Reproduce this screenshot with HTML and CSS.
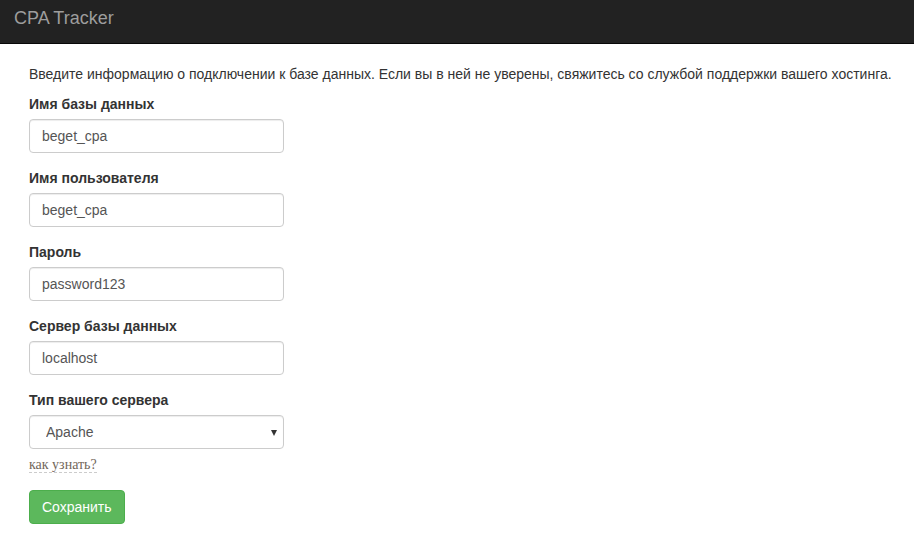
FILE: index.html
```html
<!DOCTYPE html>
<html lang="ru">
<head>
<meta charset="utf-8">
<title>CPA Tracker</title>
<link rel="stylesheet" href="styles.css">
</head>
<body>
<nav class="navbar">
  <a class="brand" href="#">CPA Tracker</a>
</nav>
<main class="content">
  <p class="intro">Введите информацию о подключении к базе данных. Если вы в ней не уверены, свяжитесь со службой поддержки вашего хостинга.</p>
  <form class="form">
    <div class="form-group">
      <label class="label">Имя базы данных</label>
      <input class="control" type="text" value="beget_cpa">
    </div>
    <div class="form-group">
      <label class="label">Имя пользователя</label>
      <input class="control" type="text" value="beget_cpa">
    </div>
    <div class="form-group">
      <label class="label">Пароль</label>
      <input class="control" type="text" value="password123">
    </div>
    <div class="form-group">
      <label class="label">Сервер базы данных</label>
      <input class="control" type="text" value="localhost">
    </div>
    <div class="form-group">
      <label class="label">Тип вашего сервера</label>
      <div class="select-wrap">
        <select class="control select">
          <option>Apache</option>
          <option>Nginx</option>
        </select>
        <span class="caret"></span>
      </div>
      <div class="help"><span class="hint">как узнать?</span></div>
    </div>
    <button type="button" class="btn">Сохранить</button>
  </form>
</main>
</body>
</html>
```

FILE: styles.css
```css
* { box-sizing: border-box; }
html, body { margin: 0; padding: 0; }
body {
  font-family: "Liberation Sans", Arial, sans-serif;
  font-size: 14px;
  line-height: 20px;
  color: #333;
  background: #fff;
}
.navbar {
  height: 44px;
  background: #222;
  border-bottom: 1px solid #080808;
  margin-bottom: 20px;
}
.brand {
  display: inline-block;
  padding: 8px 14px 0;
  font-size: 18px;
  line-height: 20px;
  color: #9d9d9d;
  text-decoration: none;
}
.content {
  padding: 0 10px 0 29px;
}
.intro {
  margin: 0 0 10px;
}
.form-group {
  margin-bottom: 15px;
}
.label {
  display: block;
  font-weight: bold;
  margin-bottom: 5px;
}
.control {
  display: block;
  width: 255px;
  height: 34px;
  padding: 6px 12px;
  font-family: "Liberation Sans", Arial, sans-serif;
  font-size: 14px;
  line-height: 20px;
  color: #555;
  background: #fff;
  border: 1px solid #ccc;
  border-radius: 4px;
  box-shadow: inset 0 1px 1px rgba(0,0,0,.075);
  outline: none;
}
.select-wrap {
  position: relative;
  width: 255px;
}
.select {
  -webkit-appearance: none;
  appearance: none;
  padding-left: 16px;
}
.caret {
  position: absolute;
  right: 7px;
  top: 15px;
  width: 0;
  height: 0;
  border-left: 3.5px solid transparent;
  border-right: 3.5px solid transparent;
  border-top: 6px solid #333;
}
.help {
  margin-top: 5px;
  margin-bottom: 10px;
}
.hint {
  font-family: "Liberation Serif", "Times New Roman", serif;
  font-size: 14px;
  color: #72665a;
  border-bottom: 1px dashed #ccc;
}
.btn {
  display: inline-block;
  height: 34px;
  padding: 6px 12px;
  font-family: "Liberation Sans", Arial, sans-serif;
  font-size: 14px;
  line-height: 20px;
  color: #fff;
  background: #5cb85c;
  border: 1px solid #4cae4c;
  border-radius: 4px;
  cursor: pointer;
}
```
